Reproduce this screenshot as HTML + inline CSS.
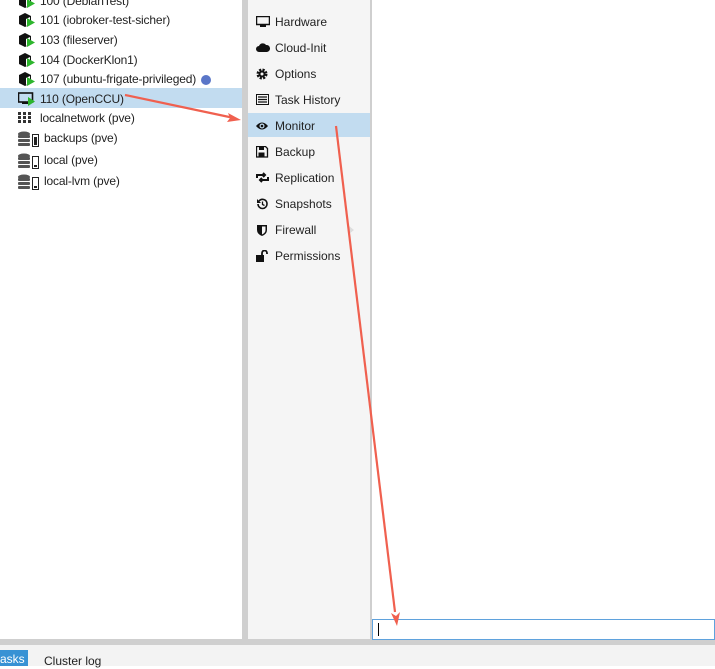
<!DOCTYPE html>
<html><head><style>
*{margin:0;padding:0;box-sizing:border-box}
body{width:715px;height:666px;overflow:hidden;background:#fff;font-family:"Liberation Sans",sans-serif;font-size:12px;color:#222;position:relative}
.a{position:absolute}
.row{position:absolute;left:0;width:242px;height:20px;line-height:22px}
.row span{position:absolute;left:40px;letter-spacing:-0.15px}
.ic{position:absolute;left:18px;top:4px}
.mi{position:absolute;left:248px;width:122px;height:26px;line-height:28px}
.mi span{position:absolute;left:27px}
.mi svg{position:absolute;left:8px;top:8px}
</style></head><body>
<div class="a" style="left:242px;top:0;width:6px;height:645px;background:#cfcfcf"></div>
<div class="a" style="left:248px;top:0;width:122px;height:639px;background:#f5f5f5"></div>
<div class="a" style="left:370px;top:0;width:2px;height:639px;background:#cfcfcf"></div>
<div class="a" style="left:0;top:639px;width:715px;height:6px;background:#cfcfcf"></div>
<div class="a" style="left:0;top:645px;width:715px;height:21px;background:#f3f3f3"></div>
<div class="a" style="left:0;top:650px;width:28px;height:16px;background:#3892d4;color:#fff;line-height:19px">asks</div>
<div class="a" style="left:44px;top:653px;line-height:16px">Cluster log</div>
<div class="a" style="left:372px;top:619px;width:343px;height:21px;border:1px solid #5fa2dd;background:#fff"></div>
<div class="a" style="left:378px;top:623px;width:1px;height:13px;background:#000"></div>

<div class="row" style="top:88px;background:#c2dcf0"></div>
<div class="row" style="top:-10px"><svg class="ic" width="18" height="14"><path d="M1 3l6-3 6 3v8l-6 3-6-3z" fill="#111"/><path d="M8 6l0 7 4-2 0-7z" fill="#fff"/><path d="M9 5l8 4.5-8 4.5z" fill="#2db52d"/></svg><span>100 (DebianTest)</span></div>
<div class="row" style="top:9px"><svg class="ic" width="18" height="14"><path d="M1 3l6-3 6 3v8l-6 3-6-3z" fill="#111"/><path d="M8 6v7l4-2V4z" fill="#fff"/><path d="M9 5l8 4.5-8 4.5z" fill="#2db52d"/></svg><span>101 (iobroker-test-sicher)</span></div>
<div class="row" style="top:29px"><svg class="ic" width="18" height="14"><path d="M1 3l6-3 6 3v8l-6 3-6-3z" fill="#111"/><path d="M8 6v7l4-2V4z" fill="#fff"/><path d="M9 5l8 4.5-8 4.5z" fill="#2db52d"/></svg><span>103 (fileserver)</span></div>
<div class="row" style="top:49px"><svg class="ic" width="18" height="14"><path d="M1 3l6-3 6 3v8l-6 3-6-3z" fill="#111"/><path d="M8 6v7l4-2V4z" fill="#fff"/><path d="M9 5l8 4.5-8 4.5z" fill="#2db52d"/></svg><span>104 (DockerKlon1)</span></div>
<div class="row" style="top:68px"><svg class="ic" width="18" height="14"><path d="M1 3l6-3 6 3v8l-6 3-6-3z" fill="#111"/><path d="M8 6v7l4-2V4z" fill="#fff"/><path d="M9 5l8 4.5-8 4.5z" fill="#2db52d"/></svg><span>107 (ubuntu-frigate-privileged)</span></div>
<div class="a" style="left:201px;top:75px;width:10px;height:10px;border-radius:50%;background:#5a76c8"></div>
<div class="row" style="top:88px"><svg class="ic" width="18" height="14"><rect x="0.5" y="1" width="14" height="9" fill="none" stroke="#111" stroke-width="1.6"/><rect x="4" y="10" width="6" height="2" fill="#111"/><path d="M10 5l7 4.5-7 4.5z" fill="#2db52d"/></svg><span>110 (OpenCCU)</span></div>
<div class="row" style="top:107px"><svg class="ic" width="16" height="14"><g fill="#333"><rect x="0" y="1" width="3" height="3"/><rect x="5" y="1" width="3" height="3"/><rect x="10" y="1" width="3" height="3"/><rect x="0" y="5" width="3" height="3"/><rect x="5" y="5" width="3" height="3"/><rect x="10" y="5" width="3" height="3"/><rect x="0" y="9" width="3" height="3"/><rect x="5" y="9" width="3" height="3"/><rect x="10" y="9" width="3" height="3"/></g></svg><span>localnetwork (pve)</span></div>
<div class="row" style="top:127px"><svg class="ic" width="24" height="16"><g fill="#555"><ellipse cx="6" cy="3" rx="6" ry="2.5"/><rect x="0" y="4" width="12" height="3" rx="1"/><rect x="0" y="8" width="12" height="3" rx="1"/><rect x="0" y="12" width="12" height="3" rx="1"/></g><rect x="14.5" y="3.5" width="6" height="12" fill="none" stroke="#222"/><rect x="16" y="6" width="3" height="8" fill="#222"/></svg><span style="left:44px">backups (pve)</span></div>
<div class="row" style="top:149px"><svg class="ic" width="24" height="16"><g fill="#555"><ellipse cx="6" cy="3" rx="6" ry="2.5"/><rect x="0" y="4" width="12" height="3" rx="1"/><rect x="0" y="8" width="12" height="3" rx="1"/><rect x="0" y="12" width="12" height="3" rx="1"/></g><rect x="14.5" y="3.5" width="6" height="12" fill="none" stroke="#222"/><rect x="16" y="12" width="3" height="2" fill="#222"/></svg><span style="left:44px">local (pve)</span></div>
<div class="row" style="top:170px"><svg class="ic" width="24" height="16"><g fill="#555"><ellipse cx="6" cy="3" rx="6" ry="2.5"/><rect x="0" y="4" width="12" height="3" rx="1"/><rect x="0" y="8" width="12" height="3" rx="1"/><rect x="0" y="12" width="12" height="3" rx="1"/></g><rect x="14.5" y="3.5" width="6" height="12" fill="none" stroke="#222"/><rect x="16" y="12" width="3" height="2" fill="#222"/></svg><span style="left:44px">local-lvm (pve)</span></div>

<div class="mi" style="top:113px;height:24px;background:#c2dcf0"></div>
<div class="mi" style="top:8px"><svg width="14" height="12"><rect x="0.5" y="0.5" width="13" height="8" fill="none" stroke="#111" stroke-width="1.5"/><rect x="4" y="9" width="6" height="2" fill="#111"/></svg><span>Hardware</span></div>
<div class="mi" style="top:34px"><svg width="14" height="12"><path d="M3 10a3 3 0 010-6 4 4 0 017-1 3 3 0 011 7z" fill="#111"/></svg><span>Cloud-Init</span></div>
<div class="mi" style="top:60px"><svg width="14" height="12"><circle cx="6" cy="6" r="4" fill="none" stroke="#111" stroke-width="3" stroke-dasharray="2 1.2"/><circle cx="6" cy="6" r="3.5" fill="#111"/><circle cx="6" cy="6" r="1.5" fill="#f5f5f5"/></svg><span>Options</span></div>
<div class="mi" style="top:86px"><svg width="14" height="12"><rect x="0.5" y="0.5" width="12" height="10" fill="none" stroke="#111"/><path d="M2 3h9M2 5.5h9M2 8h9" stroke="#111" stroke-width="1.3"/></svg><span>Task History</span></div>
<div class="mi" style="top:112px"><svg width="14" height="12"><path d="M0 6q6-7 12 0q-6 7-12 0z" fill="#111"/><circle cx="6" cy="6" r="2.5" fill="#c2dcf0"/><circle cx="6" cy="6" r="1.3" fill="#111"/></svg><span>Monitor</span></div>
<div class="mi" style="top:138px"><svg width="14" height="12"><path d="M0.5 0.5h9l2 2v8.5h-11z" fill="none" stroke="#111" stroke-width="1.3"/><rect x="3" y="1" width="5" height="3" fill="#111"/><rect x="2.5" y="6.5" width="6" height="4" fill="#111"/></svg><span>Backup</span></div>
<div class="mi" style="top:164px"><svg width="14" height="12"><path d="M1 6V3h8M7 1l2 2-2 2M12 5v3H4M6 10l-2-2 2-2" fill="none" stroke="#111" stroke-width="2"/></svg><span>Replication</span></div>
<div class="mi" style="top:190px"><svg width="14" height="12"><path d="M2 6a4.5 4.5 0 109-0a4.5 4.5 0 00-8-3" fill="none" stroke="#111" stroke-width="1.6"/><path d="M1 1v4h4z" fill="#111"/><path d="M6.5 3.5v3l2 1" fill="none" stroke="#111" stroke-width="1.3"/></svg><span>Snapshots</span></div>
<div class="mi" style="top:216px"><svg width="14" height="12"><path d="M1 1h10v5q0 4-5 6q-5-2-5-6z" fill="#111"/><path d="M6 2.5h3.5v3.5q0 3-3.5 4.5z" fill="#f5f5f5"/></svg><span>Firewall</span></div>
<div class="a" style="left:349px;top:226px;width:0;height:0;border-left:5px solid #ddd;border-top:4px solid transparent;border-bottom:4px solid transparent"></div>
<div class="mi" style="top:242px"><svg width="14" height="12"><rect x="0" y="5" width="8" height="7" fill="#111"/><path d="M6 5V3a2.5 2.5 0 015 0v1" fill="none" stroke="#111" stroke-width="1.8"/></svg><span>Permissions</span></div>

<svg class="a" style="left:0;top:0" width="715" height="666">
<g stroke="#f0604f" stroke-width="2.2" fill="#f0604f">
<line x1="125" y1="95" x2="234" y2="118"/>
<path d="M241 120l-13 -7 2 5-3 4z" stroke="none"/>
<line x1="336" y1="126" x2="395" y2="612"/>
<path d="M397 626l-6-13 5 3 4-4z" stroke="none"/>
</g></svg>
</body></html>
